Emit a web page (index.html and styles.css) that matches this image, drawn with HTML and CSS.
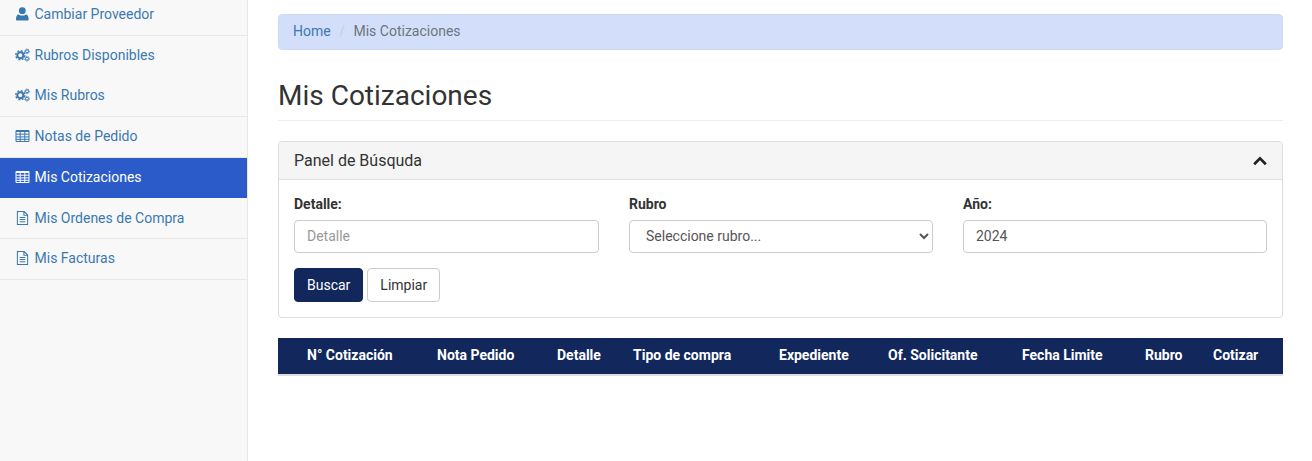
FILE: index.html
```html
<!DOCTYPE html>
<html lang="es">

<head>
    <meta charset="UTF-8">
    <meta name="viewport" content="width=device-width, initial-scale=1.0">
    <title>Mis Cotizaciones</title>
    <link rel="stylesheet" href="styles.css">
</head>

<body>
    <!-- iconos del menu -->
    <svg class="defs" width="0" height="0" aria-hidden="true">
        <symbol id="i-user" viewBox="0 0 14 14">
            <circle cx="6.800" cy="3.700" r="3.400" fill="currentColor" />
            <path d="M1.600 13.500c-.7 0-1.100-.4-1.100-1.100 0-2.900.7-5 2.800-5 1 .8 2.200 1.200 3.500 1.200s2.500-.4 3.500-1.200c2.100 0 2.800 2.100 2.800 5 0 .7-.4 1.100-1.100 1.100z" fill="currentColor" />
        </symbol>
        <symbol id="i-cogs" viewBox="0 0 15 14">
            <circle cx="5.300" cy="7.200" r="3" fill="none" stroke="currentColor" stroke-width="1.900" />
            <circle cx="5.300" cy="7.200" r="4.500" fill="none" stroke="currentColor" stroke-width="1.500" stroke-dasharray="1.800 1.730" />
            <circle cx="12" cy="3.300" r="1.500" fill="none" stroke="currentColor" stroke-width="1" />
            <circle cx="12" cy="3.300" r="2.400" fill="none" stroke="currentColor" stroke-width=".9" stroke-dasharray="1.100 .78" />
            <circle cx="12" cy="10.700" r="1.500" fill="none" stroke="currentColor" stroke-width="1" />
            <circle cx="12" cy="10.700" r="2.400" fill="none" stroke="currentColor" stroke-width=".9" stroke-dasharray="1.100 .78" />
        </symbol>
        <symbol id="i-table" viewBox="0 0 15 14">
            <path d="M1 1.500h13v11H1zM1 5.200h13M1 7.900h13M1 10.300h13M5.200 1.500v11M9.800 1.500v11" fill="none" stroke="currentColor" stroke-width="1" />
            <path d="M1 1.500h13V3H1z" fill="currentColor" />
        </symbol>
        <symbol id="i-file" viewBox="0 0 15 15">
            <path d="M2 .5h7.200L13 4.300v10.200H2zM9 .7v3.800h3.900M4.500 7h6M4.500 9.200h6M4.500 11.400h6" fill="none" stroke="currentColor" stroke-width="1.100" />
        </symbol>
    </svg>

    <div class="layout">
        <nav class="sidebar">
            <a class="nav-item first" href="#"><svg class="ico"><use href="#i-user" /></svg>Cambiar Proveedor</a>
            <a class="nav-item no-line" href="#"><svg class="ico"><use href="#i-cogs" /></svg>Rubros Disponibles</a>
            <a class="nav-item" href="#"><svg class="ico"><use href="#i-cogs" /></svg>Mis Rubros</a>
            <a class="nav-item" href="#"><svg class="ico"><use href="#i-table" /></svg>Notas de Pedido</a>
            <a class="nav-item active" href="#"><svg class="ico"><use href="#i-table" /></svg>Mis Cotizaciones</a>
            <a class="nav-item low" href="#"><svg class="ico"><use href="#i-file" /></svg>Mis Ordenes de Compra</a>
            <a class="nav-item" href="#"><svg class="ico"><use href="#i-file" /></svg>Mis Facturas</a>
        </nav>

        <main class="content">
            <ol class="breadcrumb">
                <li><a href="#">Home</a></li>
                <li class="sep">/</li>
                <li class="current">Mis Cotizaciones</li>
            </ol>

            <h1 class="page-title">Mis Cotizaciones</h1>

            <section class="panel">
                <header class="panel-head">
                    <span>Panel de Búsquda</span>
                    <svg class="chevron" viewBox="0 0 14 10"><path d="M1.200 8.200 7 2.400l5.800 5.800" fill="none" stroke="currentColor" stroke-width="2.700" /></svg>
                </header>
                <form class="panel-body">
                    <div class="fields">
                        <div class="field">
                            <label for="detalle">Detalle:</label>
                            <input id="detalle" class="control" type="text" placeholder="Detalle">
                        </div>
                        <div class="field">
                            <label for="rubro">Rubro</label>
                            <select id="rubro" class="control">
                                <option>Seleccione rubro...</option>
                            </select>
                        </div>
                        <div class="field">
                            <label for="anio">Año:</label>
                            <input id="anio" class="control" type="text" value="2024">
                        </div>
                    </div>
                    <div class="actions">
                        <button class="btn btn-primary" type="button">Buscar</button>
                        <button class="btn btn-default" type="button">Limpiar</button>
                    </div>
                </form>
            </section>

            <table class="results">
                <thead>
                    <tr>
                        <th class="c-num">N° Cotización</th>
                        <th class="c-nota">Nota Pedido</th>
                        <th class="c-detalle">Detalle</th>
                        <th class="c-tipo">Tipo de compra</th>
                        <th class="c-exp">Expediente</th>
                        <th class="c-of">Of. Solicitante</th>
                        <th class="c-fecha">Fecha Limite</th>
                        <th class="c-rubro">Rubro</th>
                        <th class="c-cotizar">Cotizar</th>
                    </tr>
                </thead>
            </table>
        </main>
    </div>
</body>

</html>
```

FILE: styles.css
```css
* {
    box-sizing: border-box;
}

html,
body {
    height: 100%;
}

body {
    margin: 0;
    overflow: hidden;
    font-family: Roboto, "Liberation Sans", sans-serif;
    font-size: 14px;
    line-height: 20px;
    color: #333;
    background-color: #fff;
}

a {
    color: #3b78b0;
    text-decoration: none;
}

.defs {
    position: absolute;
}

.layout {
    display: flex;
    height: 100%;
}

/* menu izquierdo */
.sidebar {
    flex: 0 0 248px;
    background-color: #f8f8f8;
    border-right: 1px solid #e7e7e7;
}

.nav-item {
    display: flex;
    align-items: center;
    height: 40.600px;
    padding-left: 15px;
    padding-bottom: 2px;
    border-bottom: 1px solid #e7e7e7;
}

.nav-item.first {
    height: 36px;
    padding-bottom: 7px;
}

.nav-item.no-line {
    border-bottom: 0;
}

.nav-item.low {
    padding-bottom: 0;
}

.nav-item.active {
    color: #fff;
    background-color: #2a5bc9;
    border-bottom: 0;
}

.ico {
    flex: none;
    width: 15px;
    height: 14px;
    margin-right: 4.500px;
}

/* contenido */
.content {
    flex: 1;
    min-width: 0;
    padding: 14px 29px 0 30px;
}

.breadcrumb {
    display: flex;
    height: 36px;
    margin: 0;
    padding: 6px 14px 0;
    list-style: none;
    background-color: #d3dffa;
    border: 1px solid #cfdbf6;
    border-radius: 4px;
}

.breadcrumb .sep {
    padding: 0 8.500px;
    color: #ccc;
}

.breadcrumb .current {
    color: #6c757d;
}

.page-title {
    height: 41px;
    margin: 30px 0 20px;
    font-size: 28px;
    font-weight: 400;
    line-height: 32px;
    color: #333;
    border-bottom: 1px solid #eee;
}

.panel {
    height: 177px;
    background-color: #fff;
    border: 1px solid #ddd;
    border-radius: 4px;
}

.panel-head {
    display: flex;
    align-items: center;
    justify-content: space-between;
    height: 38px;
    padding: 0 15px;
    font-size: 16px;
    background-color: #f5f5f5;
    border-bottom: 1px solid #ddd;
    border-radius: 3px 3px 0 0;
}

.chevron {
    width: 14px;
    height: 10px;
    color: #222;
}

.panel-body {
    padding: 14px 15px 0;
}

.fields {
    display: grid;
    grid-template-columns: 305px 304px 304px;
    column-gap: 30px;
}

.field label {
    display: block;
    margin-bottom: 6px;
    font-weight: 700;
}

.control {
    display: block;
    width: 100%;
    height: 33px;
    padding: 0 12px 2px;
    font-family: inherit;
    font-size: 14px;
    color: #555;
    background-color: #fff;
    border: 1px solid #ccc;
    border-radius: 4px;
}

.control::placeholder {
    color: #999;
    opacity: 1;
}

.actions {
    display: flex;
    gap: 4px;
    margin-top: 15px;
}

.btn {
    height: 34px;
    padding: 0 12px 1px;
    font-family: inherit;
    font-size: 14px;
    border: 1px solid transparent;
    border-radius: 4px;
}

.btn-primary {
    color: #fff;
    background-color: #12275c;
    border-color: #12275c;
}

.btn-default {
    color: #333;
    background-color: #fff;
    border-color: #ccc;
}

/* tabla de resultados */
.results {
    width: 100%;
    margin-top: 20px;
    table-layout: fixed;
    border-collapse: collapse;
}

.results th {
    height: 37px;
    padding: 0 0 2px;
    text-align: left;
    color: #fff;
    background-color: #12275c;
    border-bottom: 2px solid #ddd;
}

.results .c-num { width: 159px; padding-left: 29px; }
.results .c-nota { width: 120px; }
.results .c-detalle { width: 76px; }
.results .c-tipo { width: 146px; }
.results .c-exp { width: 109px; }
.results .c-of { width: 134px; }
.results .c-fecha { width: 123px; }
.results .c-rubro { width: 68px; }
.results .c-cotizar { width: 70px; }
```
